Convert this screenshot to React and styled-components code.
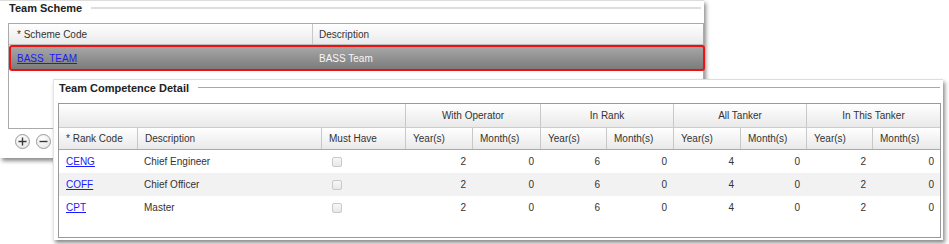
import React from "react"
import styled, { createGlobalStyle } from "styled-components"

const GlobalStyle = createGlobalStyle`
  html, body {
    margin: 0;
    padding: 0;
    background: #ffffff;
  }
  body {
    font-family: "Liberation Sans", Arial, sans-serif;
    font-size: 10px;
    color: #333333;
  }
`

const Page = styled.div`
  position: relative;
  width: 949px;
  height: 244px;
  overflow: hidden;
`

const Panel = styled.section`
  box-sizing: border-box;
  background: #ffffff;
  border-top: 1px solid #dddddd;
  box-shadow: 2px 3px 4px rgba(0, 0, 0, 0.45);
`

const SchemePanel = styled(Panel)`
  width: 704px;
  height: 158px;
`

/* the detail window sits over the scheme list */
const DetailPanel = styled(Panel)`
  position: absolute;
  left: 53px;
  top: 79px;
  width: 890px;
  height: 161px;
  border-left: 1px solid #e4e4e4;
`

const Legend = styled.div`
  display: flex;
  align-items: center;
  gap: 9px;
  height: ${(p) => p.$h}px;
  padding-left: ${(p) => p.$pad}px;
  padding-right: 3px;
  h2 {
    margin: 0;
    font-size: 11px;
    font-weight: bold;
    color: #222222;
    white-space: nowrap;
  }
`

const LegendLine = styled.div`
  flex: 1;
  height: ${(p) => p.$thick}px;
  background: ${(p) => p.$color};
`

const SchemeBox = styled.div`
  box-sizing: border-box;
  width: 696px;
  height: 106px;
  margin: 9px 0 0 8px;
  border: 1px solid #aaaaaa;
`

const SchemeRow = styled.div`
  display: grid;
  grid-template-columns: 303px 1fr;
  box-sizing: border-box;
`

const SchemeHead = styled(SchemeRow)`
  height: 21px;
  background: linear-gradient(#ffffff, #eaeaea);
  border-bottom: 1px solid #bbbbbb;
`

const SchemeSelected = styled(SchemeRow)`
  height: 26px;
  width: calc(100% + 2px);
  border: 2px solid #ee1111;
  border-radius: 3px;
  background: linear-gradient(#a6a6a6, #7c7c7c);
  color: #f6f6f6;
  grid-template-columns: 301px 1fr;
`

const Cell = styled.div`
  display: flex;
  align-items: center;
  justify-content: ${(p) =>
    p.$align === "right" ? "flex-end" : p.$align === "center" ? "center" : "flex-start"};
  box-sizing: border-box;
  padding: 0 ${(p) => (p.$align === "right" ? 6 : p.$pad || 7)}px 0
    ${(p) => (p.$align === "right" ? 0 : p.$pad || 7)}px;
  border-left: ${(p) => (p.$line ? "1px solid #c8c8c8" : "none")};
  grid-column: ${(p) => (p.$span ? `span ${p.$span}` : "auto")};
  white-space: nowrap;
  overflow: hidden;
`

const Link = styled.a`
  color: #1a1aff;
  text-decoration: underline;
  cursor: pointer;
`

const Tools = styled.div`
  display: flex;
  gap: 6px;
  margin-top: 5px;
  padding-left: 15px;
`

const RoundButton = styled.button`
  width: 15px;
  height: 15px;
  padding: 0;
  border: 1px solid #9a9a9a;
  border-radius: 50%;
  background: radial-gradient(circle at 40% 35%, #ffffff, #e2e2e2);
  display: flex;
  align-items: center;
  justify-content: center;
  cursor: pointer;
`

const DetailBox = styled.div`
  box-sizing: border-box;
  width: 883px;
  height: 135px;
  margin: 8px 0 0 4px;
  border: 1px solid #999999;
`

const COLS = "78px 184px 84px 67px 68px 66px 67px 67px 66px 66px 68px"

const GridRow = styled.div`
  display: grid;
  grid-template-columns: ${COLS};
  box-sizing: border-box;
  height: ${(p) => p.$h}px;
  background: ${(p) => p.$bg || "transparent"};
`

const HeadRow = styled(GridRow)`
  background: linear-gradient(#ffffff, #e9e9e9);
  border-bottom: 1px solid ${(p) => p.$edge};
`

const Check = styled.span`
  display: inline-block;
  box-sizing: border-box;
  width: 10px;
  height: 10px;
  margin-left: 4px;
  border: 1px solid #c9c9c9;
  border-radius: 2px;
  background: linear-gradient(#f7f7f7, #e8e8e8);
`

const Plus = () => (
  <svg width="9" height="9" viewBox="0 0 9 9">
    <path d="M4.5 0.5v8M0.5 4.5h8" stroke="#3a3a3a" strokeWidth="1.4" />
  </svg>
)

const Minus = () => (
  <svg width="9" height="9" viewBox="0 0 9 9">
    <path d="M0.5 4.5h8" stroke="#3a3a3a" strokeWidth="1.4" />
  </svg>
)

const ranks = [
  { code: "CENG", name: "Chief Engineer" },
  { code: "COFF", name: "Chief Officer" },
  { code: "CPT", name: "Master" },
]

const values = [2, 0, 6, 0, 4, 0, 2, 0]

const groups = ["With Operator", "In Rank", "All Tanker", "In This Tanker"]

const App = () => {
  return (
    <Page>
      <GlobalStyle />
      <SchemePanel>
        <Legend $h={13} $pad={9}>
          <h2>Team Scheme</h2>
          <LegendLine $thick={2} $color="#dedede" />
        </Legend>
        <SchemeBox>
          <SchemeHead>
            <Cell $pad={8}>* Scheme Code</Cell>
            <Cell $line $pad={6}>Description</Cell>
          </SchemeHead>
          <SchemeSelected>
            <Cell $pad={6}>
              <Link>BASS_TEAM</Link>
            </Cell>
            <Cell $pad={7}>BASS Team</Cell>
          </SchemeSelected>
        </SchemeBox>
        <Tools>
          <RoundButton aria-label="add">
            <Plus />
          </RoundButton>
          <RoundButton aria-label="remove">
            <Minus />
          </RoundButton>
        </Tools>
      </SchemePanel>

      <DetailPanel>
        <Legend $h={15} $pad={5}>
          <h2>Team Competence Detail</h2>
          <LegendLine $thick={1} $color="#a8a8a8" />
        </Legend>
        <DetailBox>
          <HeadRow $h={24} $edge="#cccccc">
            <Cell $span={3} />
            {groups.map((g) => (
              <Cell key={g} $span={2} $line $align="center">
                {g}
              </Cell>
            ))}
          </HeadRow>
          <HeadRow $h={22} $edge="#aaaaaa">
            <Cell>* Rank Code</Cell>
            <Cell $line>Description</Cell>
            <Cell $line>Must Have</Cell>
            {groups.map((g) => (
              <React.Fragment key={g}>
                <Cell $line>Year(s)</Cell>
                <Cell $line>Month(s)</Cell>
              </React.Fragment>
            ))}
          </HeadRow>
          {ranks.map((r, i) => (
            <GridRow key={r.code} $h={23} $bg={i % 2 ? "#f2f2f2" : "#ffffff"}>
              <Cell>
                <Link>{r.code}</Link>
              </Cell>
              <Cell>{r.name}</Cell>
              <Cell>
                <Check />
              </Cell>
              {values.map((v, j) => (
                <Cell key={j} $align="right">
                  {v}
                </Cell>
              ))}
            </GridRow>
          ))}
        </DetailBox>
      </DetailPanel>
    </Page>
  )
}

export default App
